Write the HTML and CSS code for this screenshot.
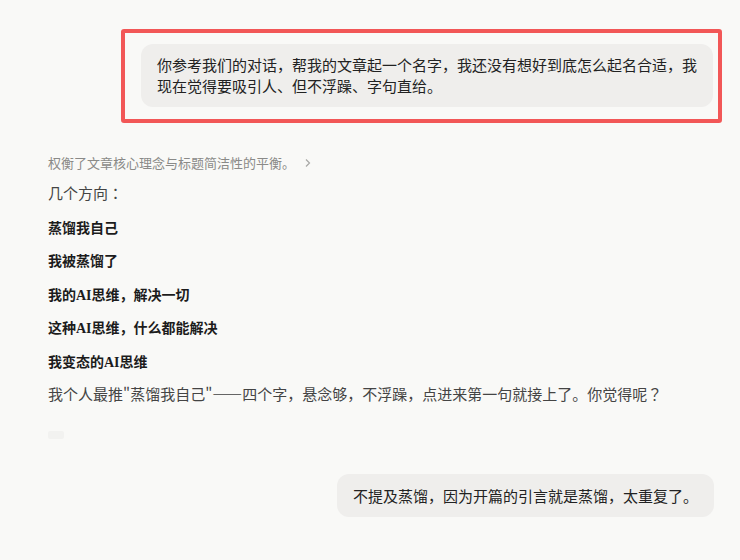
FILE: index.html
```html
<!DOCTYPE html>
<html lang="zh">

<head>
    <meta charset="utf-8">
    <meta name="viewport" content="width=device-width, initial-scale=1.0">
    <title>对话</title>
    <link rel="stylesheet" href="styles.css">
</head>

<body>
    <main class="chat">
        <div class="user-row">
            <div class="markering">
                <div class="boble bred">你参考我们的对话，帮我的文章起一个名字，我还没有想好到底怎么起名合适，我现在觉得要吸引人、但不浮躁、字句直给。</div>
            </div>
        </div>

        <section class="svar">
            <p class="tanke">权衡了文章核心理念与标题简洁性的平衡。<span class="pil">
                    <svg width="8" height="10" viewBox="0 0 8 10"><path d="M2 1.5 L5.5 5 L2 8.5" fill="none" stroke="#a8a8a6" stroke-width="1.2"/></svg>
                </span></p>
            <p class="tekst">几个方向<span class="tegn" lang="zh-Hant">：</span></p>
            <p class="forslag">蒸馏我自己</p>
            <p class="forslag">我被蒸馏了</p>
            <p class="forslag">我的<span class="latin">AI</span>思维，解决一切</p>
            <p class="forslag">这种<span class="latin">AI</span>思维，什么都能解决</p>
            <p class="forslag">我变态的<span class="latin">AI</span>思维</p>
            <p class="tekst">我个人最推"蒸馏我自己"——四个字，悬念够，不浮躁，点进来第一句就接上了。你觉得呢<span class="tegn" lang="zh-Hant">？</span></p>
            <div class="handling"></div>
        </section>

        <div class="user-row sidste">
            <div class="boble">不提及蒸馏，因为开篇的引言就是蒸馏，太重复了。</div>
        </div>
    </main>
</body>

</html>
```

FILE: styles.css
```css
body {
    margin: 0;
    background-color: #f9f9f7;
    font-family: "Noto Sans CJK SC", sans-serif;
    color: #222;
    text-spacing-trim: space-all;
}

.chat {
    display: flex;
    flex-direction: column;
    height: 560px;
    overflow: hidden;
}

.user-row {
    display: flex;
    justify-content: flex-end;
}

.markering {
    margin-top: 29px;
    margin-right: 18px;
    padding: 11px 5px 12px 16px;
    border: 4px solid #f25757;
    border-radius: 3px;
}

.boble {
    background-color: #efeeec;
    border-radius: 12px;
    padding: 11px 16px;
    font-size: 15px;
    line-height: 20.5px;
    color: #222;
}

.bred {
    width: 572px;
    box-sizing: border-box;
}

.sidste {
    margin-top: 35px;
    margin-right: 26px;
}

.sidste .boble {
    line-height: 21px;
}

.svar {
    display: flex;
    flex-direction: column;
    gap: 11.5px;
    margin-top: 30px;
    padding-left: 48px;
}

.svar p {
    margin: 0;
    line-height: 22px;
}

.svar .tanke {
    font-size: 13px;
    line-height: 20px;
    color: #8a8a88;
    margin-bottom: -2.5px;
}

.pil {
    display: inline-block;
    margin-left: 9px;
}

.tekst {
    font-size: 15px;
    color: #444;
}

/* centrerede tegn som i referencen */
.tegn {
    font-family: "Noto Sans CJK TC", sans-serif;
}

.forslag {
    font-size: 14px;
    font-weight: bold;
    color: #1c1c1c;
}

.latin {
    font-family: "Liberation Serif", serif;
    line-height: 1;
}

.handling {
    width: 16px;
    height: 8px;
    margin-top: 14px;
    background-color: #f2f2f0;
    border-radius: 2px;
}
```
